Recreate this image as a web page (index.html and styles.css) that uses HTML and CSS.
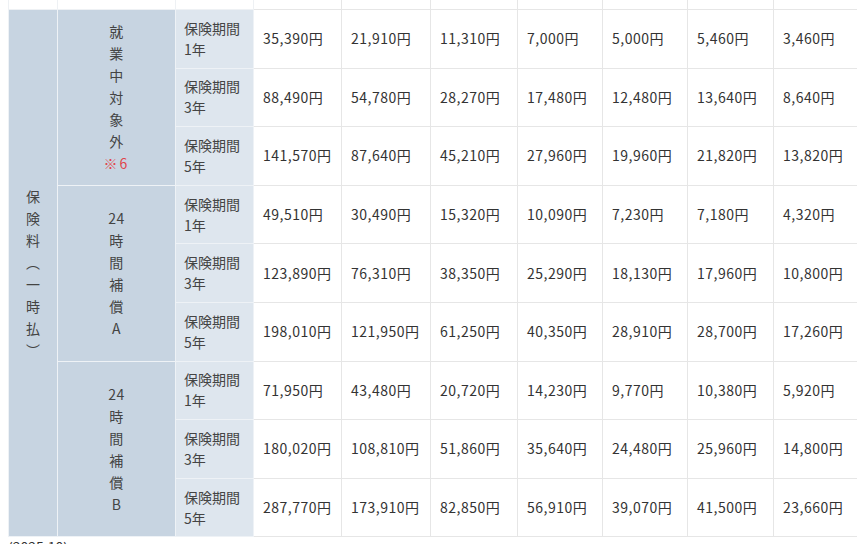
FILE: index.html
```html
<!DOCTYPE html>
<html lang="ja">
<head>
<meta charset="utf-8">
<title>保険料表</title>
<link rel="stylesheet" href="styles.css">
</head>
<body>
<table class="rates">
  <colgroup>
    <col class="c-main"><col class="c-sub"><col class="c-term">
    <col class="c-d1"><col class="c-d2"><col class="c-d3"><col class="c-d4"><col class="c-d5"><col class="c-d6"><col class="c-d7">
  </colgroup>
  <tbody>
    <tr class="tail">
      <td class="blank"></td><td class="blank"></td><td class="blank"></td>
      <td></td><td></td><td></td><td></td><td></td><td></td><td></td>
    </tr>
    <tr>
      <th class="main" rowspan="9"><span class="vert">保<br>険<br>料<br>︵<br>一<br>時<br>払<br>︶</span></th>
      <th class="sub" rowspan="3"><span class="vert">就<br>業<br>中<br>対<br>象<br>外<br><span class="note">※6</span></span></th>
      <th class="term">保険期間<br>1年</th>
      <td>35,390円</td><td>21,910円</td><td>11,310円</td><td>7,000円</td><td>5,000円</td><td>5,460円</td><td>3,460円</td>
    </tr>
    <tr>
      <th class="term">保険期間<br>3年</th>
      <td>88,490円</td><td>54,780円</td><td>28,270円</td><td>17,480円</td><td>12,480円</td><td>13,640円</td><td>8,640円</td>
    </tr>
    <tr>
      <th class="term">保険期間<br>5年</th>
      <td>141,570円</td><td>87,640円</td><td>45,210円</td><td>27,960円</td><td>19,960円</td><td>21,820円</td><td>13,820円</td>
    </tr>
    <tr>
      <th class="sub" rowspan="3"><span class="vert">24<br>時<br>間<br>補<br>償<br>A</span></th>
      <th class="term">保険期間<br>1年</th>
      <td>49,510円</td><td>30,490円</td><td>15,320円</td><td>10,090円</td><td>7,230円</td><td>7,180円</td><td>4,320円</td>
    </tr>
    <tr>
      <th class="term">保険期間<br>3年</th>
      <td>123,890円</td><td>76,310円</td><td>38,350円</td><td>25,290円</td><td>18,130円</td><td>17,960円</td><td>10,800円</td>
    </tr>
    <tr>
      <th class="term">保険期間<br>5年</th>
      <td>198,010円</td><td>121,950円</td><td>61,250円</td><td>40,350円</td><td>28,910円</td><td>28,700円</td><td>17,260円</td>
    </tr>
    <tr>
      <th class="sub" rowspan="3"><span class="vert">24<br>時<br>間<br>補<br>償<br>B</span></th>
      <th class="term">保険期間<br>1年</th>
      <td>71,950円</td><td>43,480円</td><td>20,720円</td><td>14,230円</td><td>9,770円</td><td>10,380円</td><td>5,920円</td>
    </tr>
    <tr>
      <th class="term">保険期間<br>3年</th>
      <td>180,020円</td><td>108,810円</td><td>51,860円</td><td>35,640円</td><td>24,480円</td><td>25,960円</td><td>14,800円</td>
    </tr>
    <tr>
      <th class="term">保険期間<br>5年</th>
      <td>287,770円</td><td>173,910円</td><td>82,850円</td><td>56,910円</td><td>39,070円</td><td>41,500円</td><td>23,660円</td>
    </tr>
  </tbody>
</table>
<p class="date">(2025.10)</p>
</body>
</html>
```
FILE: styles.css
```css
html, body {
  background: #ffffff;
}
body {
  margin: 0 8px;
  font-family: "Noto Sans CJK JP", "Noto Sans", sans-serif;
  font-size: 14px;
  color: #333333;
}
.rates {
  border-collapse: collapse;
  table-layout: fixed;
  width: 849px;
}
.c-main { width: 49px; }
.c-sub { width: 118px; }
.c-term { width: 78px; }
.c-d1 { width: 88px; }
.c-d2 { width: 89px; }
.c-d3 { width: 87px; }
.c-d4 { width: 85px; }
.c-d5 { width: 85px; }
.c-d6 { width: 86px; }
.c-d7 { width: 84px; }

.rates td, .rates th {
  border: 1px solid #e6e6e6;
  padding: 7.8px 8px;
  line-height: 21px;
  font-weight: normal;
  text-align: left;
  vertical-align: middle;
  white-space: nowrap;
}
.rates td {
  letter-spacing: 0.5px;
  padding-left: 9px;
}
.rates tr.tail td {
  height: 9px;
  padding: 0;
  border-top: none;
  line-height: 0;
}
.rates tr.tail td.blank {
  border-color: #eef1f4;
}
.rates th.main,
.rates th.sub {
  background: #c7d4e1;
  text-align: center;
  border-color: #eef2f6;
  color: #444444;
  line-height: 22px;
}
.rates th.sub {
  letter-spacing: 0.5px;
}
.rates th.term {
  background: #dee6ee;
  border-color: #eef2f6;
  color: #444444;
  padding-left: 8px;
}
.vert {
  display: inline-block;
}
.note {
  color: #e0464b;
  letter-spacing: 2px;
}
.date {
  margin: 0;
  line-height: 21px;
  color: #333333;
}
```
